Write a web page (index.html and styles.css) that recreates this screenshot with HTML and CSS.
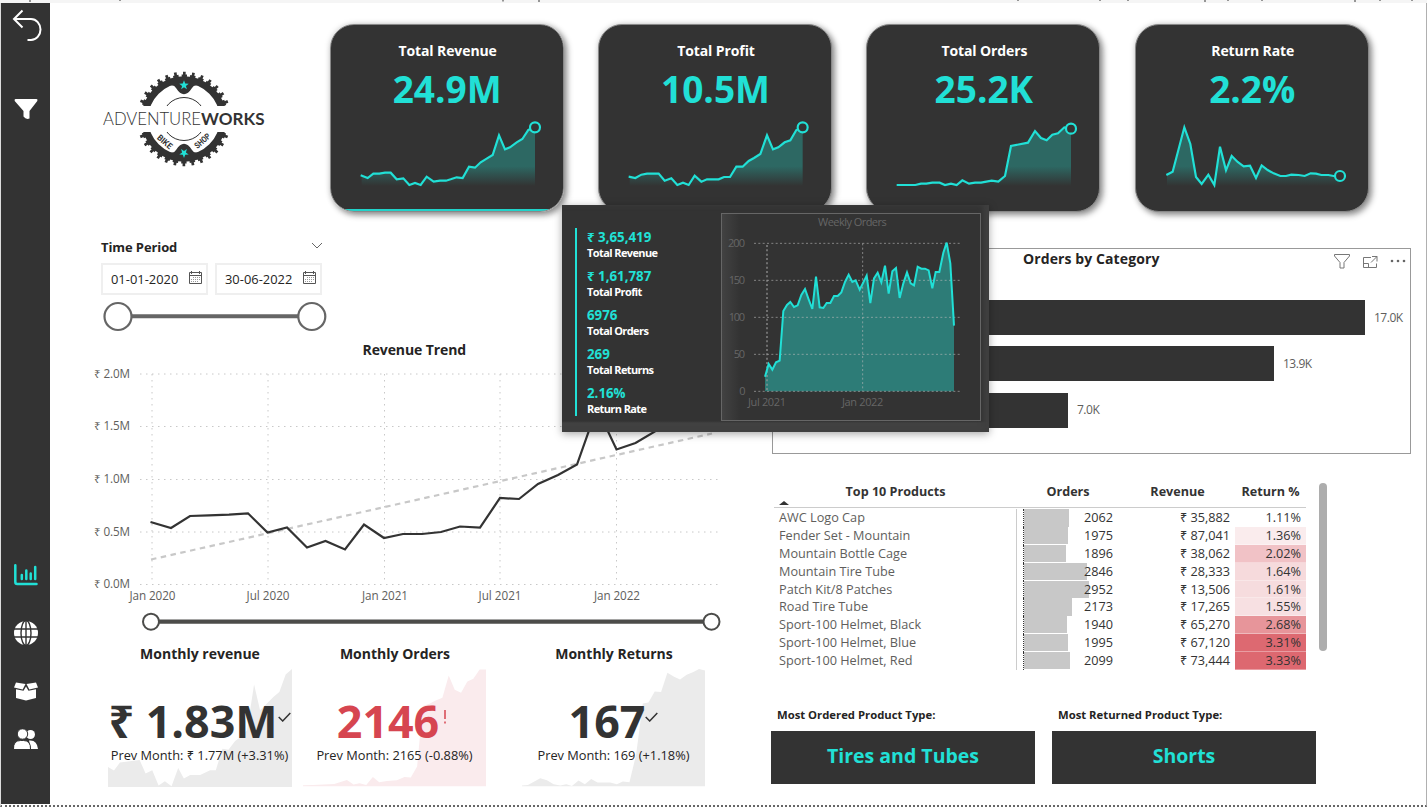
FILE: index.html
```html
<!DOCTYPE html>
<html lang="en">
<head>
<meta charset="utf-8">
<title>AdventureWorks Dashboard</title>
<link rel="stylesheet" href="styles.css">
</head>
<body>
<div class="topstrip"><svg width="1427" height="3" viewBox="0 0 1427 3"><path d="M30 0v2M120 0v1M503 0v1.500M539 0v2M1018 0v1M1100 0v1M1128 0v1M1205 0v2M1228 0v1M1262 0v1M1355 0v2M1380 0v1M1412 0v1" stroke="#777" stroke-width="1.500"/></svg></div>
<div class="page">
<nav class="sidebar">
  <svg class="nav-back" width="30" height="34" viewBox="0 0 30 34" fill="none" stroke="#fff" stroke-width="2"><path d="M10.500 1.500L2 10l8.500 8.500M2.500 10H19a9.500 10.500 0 0 1 0 21h-3.500"/></svg>
  <svg class="nav-filter" width="24" height="21" viewBox="0 0 24 21" fill="#fff"><path d="M1.500 0h21q1.500 0 .8 2L15.500 12v7.500q-3.500 1.500-6-2V12L.7 2Q.2 0 1.500 0z"/></svg>
  <svg class="nav-chart" width="24" height="22" viewBox="0 0 24 22" fill="none" stroke="#21e0d6" stroke-linecap="round" stroke-width="2.500"><path d="M1.300 1.300V18q0 2 2 2H22.500M7.800 11v4M12.300 6.500V15M16.700 9.500V15M21.200 3v12"/></svg>
  <svg class="nav-globe" width="24" height="24" viewBox="0 0 24 24"><circle cx="12" cy="12" r="12" fill="#fff"/><g fill="none" stroke="#333" stroke-width="1.400"><ellipse cx="12" cy="12" rx="5" ry="12.500"/><path d="M12 0v24M0 8h24M0 16h24"/></g></svg>
  <svg class="nav-box" width="24" height="19" viewBox="0 0 24 19" fill="#fff"><path d="M2 .5l9.500 1.500L8.700 7.500 0 5.500zM22 .5L12.500 2l2.800 5.500L24 5.500zM2 7.300l7.500 1.500L12 4.500l2.500 4.300L22 7.300V16l-10 2.500L2 16z"/></svg>
  <svg class="nav-people" width="24" height="20" viewBox="0 0 24 20" fill="#fff"><circle cx="16.500" cy="5.500" r="4.500"/><path d="M15 11.500q8-1 9 8.500h-7z"/><circle cx="8.500" cy="5" r="5.200" stroke="#333"/><path d="M-.5 20.500q-.5-9 7-9h3q7.500 0 7 9z" stroke="#333"/></svg>
</nav>
<main class="content">
  <section class="summary">
    <svg class="logo" width="170" height="100" viewBox="100 69 170 100">
      <defs><clipPath id="halves"><path d="M100 60h170v46H100zM100 132h170v40H100z"/></clipPath></defs>
      <g clip-path="url(#halves)">
        <circle cx="184" cy="119" r="39.300" fill="none" stroke="#333" stroke-width="7"/>
        <circle cx="184" cy="119" r="43" fill="none" stroke="#333" stroke-width="3" stroke-dasharray="5.400 3.043" stroke-dashoffset="2.700"/>
        <circle cx="184" cy="119" r="45.500" fill="none" stroke="#333" stroke-width="3.500" stroke-dasharray="2.700 6.234" stroke-dashoffset="1.350"/>
        <path d="M168 86Q174 84 176 88Q184 100.500 192 88Q194 84 200 86L196 79H172zM168 152Q174 154 176 150Q184 137.500 192 150Q194 154 200 152L196 159H172z" fill="#333"/>
        <circle cx="184" cy="119" r="21.500" fill="none" stroke="#333"/>
      </g>
      <path d="M184 80.300l1.200 3.300 3.500.1-2.800 2.200 1 3.400-2.900-2-2.900 2 1-3.400-2.800-2.200 3.500-.1zM184 158l1.200-3.300 3.500-.1-2.800-2.200 1-3.400-2.900 2-2.900-2 1 3.400-2.800 2.200 3.500.1z" fill="#21e0d6"/>
      <text class="logo-light" x="103" y="125" textLength="98" lengthAdjust="spacingAndGlyphs">ADVENTURE</text>
      <text class="logo-bold" x="201" y="125" textLength="63.500" lengthAdjust="spacingAndGlyphs">WORKS</text>
      <text class="logo-small" transform="translate(156.500 138.500) rotate(41)" textLength="17" lengthAdjust="spacingAndGlyphs">BIKE</text>
      <text class="logo-small" transform="translate(197.500 149) rotate(-41)" textLength="18" lengthAdjust="spacingAndGlyphs">SHOP</text>
    </svg>
    <div class="cards">
      <article class="card selected"><h3>Total Revenue</h3><strong>24.9M</strong>
        <svg viewBox="30 330 702 231"><defs><linearGradient id="fade" gradientUnits="userSpaceOnUse" x1="0" y1="330" x2="0" y2="528"><stop offset=".7" stop-color="#2d6863"/><stop offset="1" stop-color="#2d6863" stop-opacity="0"/></linearGradient></defs>
        <path fill="url(#fade)" d="M125 528V498L143 504 160 491 178 491 195 488 212 488 230 508 250 505 268 525 285 519 302 525 320 500 341 515 360 512 378 512 392 508 410 502 428 504 447 470 465 473 482 457 500 446 518 435 537 376 555 418 570 412 590 397 607 387 625 360 645 352V528z"/>
        <polyline points="122,496 143,504 160,491 178,491 195,488 212,488 230,508 250,505 268,525 285,519 302,525 320,500 341,515 360,512 378,512 392,508 410,502 428,504 447,470 465,473 482,457 500,446 518,435 537,376 555,418 570,412 590,397 607,387 625,360 645,352"/><circle cx="645" cy="352" r="15"/></svg></article>
      <article class="card"><h3>Total Profit</h3><strong>10.5M</strong>
        <svg viewBox="40 330 702 231"><path fill="url(#fade)" d="M135 528V500L152 504 170 494 187 491 222 491 240 512 260 505 278 525 295 518 312 525 330 497 350 515 367 508 402 508 418 501 436 501 455 470 474 470 492 453 508 444 527 432 547 376 565 418 581 412 600 397 617 391 635 360 654 352V528z"/>
        <polyline points="132,500 152,504 170,494 187,491 222,491 240,512 260,505 278,525 295,518 312,525 330,497 350,515 367,508 402,508 418,501 436,501 455,470 474,470 492,453 508,444 527,432 547,376 565,418 581,412 600,397 617,391 635,360 654,352"/><circle cx="654" cy="352" r="15"/></svg></article>
      <article class="card"><h3>Total Orders</h3><strong>25.2K</strong>
        <svg viewBox="35 330 702 231"><path fill="url(#fade)" d="M130 528V525L183 525 200 521 216 521 234 518 256 518 272 525 290 521 307 525 324 511 344 521 362 518 380 518 412 512 432 515 452 498 470 408 521 398 542 363 560 384 577 391 594 374 611 370 630 352 650 356V528z"/>
        <polyline points="127,525 183,525 200,521 216,521 234,518 256,518 272,525 290,521 307,525 324,511 344,521 362,518 380,518 412,512 432,515 452,498 470,408 521,398 542,363 560,384 577,391 594,374 611,370 630,352 650,356"/><circle cx="650" cy="356" r="15"/></svg></article>
      <article class="card"><h3>Return Rate</h3><strong>2.2%</strong>
        <svg viewBox="44 330 702 231"><path fill="url(#fade)" d="M140 528V494L157 485 192 352 210 402 227 501 244 522 264 494 282 525 299 410 317 481 334 438 352 456 370 469 389 467 407 504 424 466 442 480 460 490 480 498 497 498 513 494 535 495 553 498 571 490 587 491 603 495 624 495 640 498 658 498V528z"/>
        <polyline points="138,495 157,485 192,352 210,402 227,501 244,522 264,494 282,525 299,410 317,481 334,438 352,456 370,469 389,467 407,504 424,466 442,480 460,490 480,498 497,498 513,494 535,495 553,498 571,490 587,491 603,495 624,495 640,498 658,498"/><circle cx="659" cy="498" r="15"/></svg></article>
    </div>
  </section>
  <div class="columns">
  <div class="left">
    <section class="period">
      <header><h4>Time Period</h4><svg width="12" height="8" viewBox="0 0 12 8" fill="none" stroke="#666"><path d="M1 1l5 5 5-5"/></svg></header>
      <div class="dates">
        <div class="date"><span>01-01-2020</span><svg width="15" height="14" viewBox="0 0 15 14"><use href="#cal"/></svg></div>
        <div class="date"><span>30-06-2022</span><svg width="15" height="14" viewBox="0 0 15 14"><g id="cal" fill="none" stroke="#555"><path d="M1.500 1.500h12v11h-12zM1.500 4.500h12M3.500 0v3M11.500 0v3"/><path stroke="#999" stroke-dasharray="1 1" d="M5 6.500h7M3 8.500h9M3 10.500h7"/></g></svg></div>
      </div>
      <svg class="range" width="228" height="32" viewBox="101 301 228 32"><path d="M118 316.300H312" stroke="#666" stroke-width="4"/><g fill="#fff" stroke="#666" stroke-width="2.200"><circle cx="118" cy="316.500" r="13.500"/><circle cx="311.800" cy="316.500" r="13.500"/></g></svg>
    </section>
    <section class="trend">
      <h4>Revenue Trend</h4>
      <svg width="640" height="271" viewBox="90 362 640 271">
        <g stroke="#c8c8c8" stroke-dasharray="1.500 4.500"><path d="M140 374H720M140 426.500H720M140 479.500H720M140 532H720M140 584.500H720M152 374V584M268 374V584M384.500 374V584M500 374V584M616.500 374V584"/></g>
        <g class="axis"><text x="94" y="377.500" textLength="36">₹ 2.0M</text><text x="94" y="430" textLength="36">₹ 1.5M</text><text x="94" y="483" textLength="36">₹ 1.0M</text><text x="94" y="535.500" textLength="36">₹ 0.5M</text><text x="94" y="587.500" textLength="36">₹ 0.0M</text>
        <text x="129.500" y="599.500" textLength="46">Jan 2020</text><text x="246.500" y="599.500" textLength="43">Jul 2020</text><text x="362" y="599.500" textLength="46">Jan 2021</text><text x="478.500" y="599.500" textLength="43">Jul 2021</text><text x="594" y="599.500" textLength="46">Jan 2022</text></g>
        <path d="M151 559.500L712 433.500" stroke="#c8c8c8" stroke-width="2.200" stroke-dasharray="5.500 4.500"/>
        <polyline fill="none" stroke="#333" stroke-width="2.200" points="150.500,522 171,528 190,516 209,515.300 229,514.700 248,513.300 267.500,532.500 287,527.500 307,547.500 325.500,541 345,549.500 364,524.500 384,538 403,534 422,534 441,532 460,526.500 480,527.500 500,498 519,499 538,484 558,475 577,464.500 597,408 616.500,449.500 635.500,443 655,431.500 674,410 693,400 711,392"/>
        <path d="M151 621.700H712" stroke="#4c4c4a" stroke-width="4.200"/><g fill="#fff" stroke="#4c4c4a" stroke-width="2"><circle cx="151" cy="621.700" r="8"/><circle cx="711.500" cy="621.700" r="8"/></g>
      </svg>
    </section>
    <section class="kpis">
      <article class="kpi"><h4>Monthly revenue</h4><div class="stack"><svg viewBox="323 356 553 354"><path fill="#ebebeb" d="M323 710V650L341 661 359 637 418 629 436 670 456 660 475 706 494 693 514 708 534 653 551 685 570 674 600 674 630 660 647 660 667 595 685 598 705 572 722 560 741 540 762 402 780 480 800 460 820 440 838 425 857 372 876 356V710z"/></svg>
        <div class="goal"><p class="big">₹ 1.83M<svg width="13" height="10" viewBox="0 0 13 10" fill="none" stroke="#333" stroke-width="1.500"><path d="M.7 5l4 4L12.300 1"/></svg></p><p class="prev">Prev Month: ₹ 1.77M (+3.31%)</p></div></div></article>
      <article class="kpi bad"><h4>Monthly Orders</h4><div class="stack"><svg viewBox="8 143 553 354"><path fill="#faebed" d="M8 495V492L37 491 102 488 140 476 160 490 178 486 198 491 218 467 237 483 260 479 290 477 313 467 332 469 351 436 368 254 388 247 405 238 427 229 446 162 464 205 483 214 502 180 520 172 539 144 558 144V495z"/></svg>
        <div class="goal"><p class="big">2146<svg width="13" height="14" viewBox="0 0 13 14" stroke="#d64550" stroke-width="1.500"><path d="M6 0v9M6 11.500v2"/></svg></p><p class="prev">Prev Month: 2165 (-0.88%)</p></div></div></article>
      <article class="kpi"><h4>Monthly Returns</h4><div class="stack"><svg viewBox="665 143 553 354"><path fill="#ebebeb" d="M665 495V493L683 491 720 471 740 477 760 489 780 493 798 489 815 494 835 478 854 489 873 473 892 484 930 484 950 489 968 481 988 483 1008 400 1028 246 1045 243 1064 210 1083 212 1102 154 1122 166 1140 174 1160 160 1180 152 1197 143 1215 147V495z"/></svg>
        <div class="goal"><p class="big">167<svg width="13" height="10" viewBox="0 0 13 10" fill="none" stroke="#333" stroke-width="1.500"><path d="M.7 5l4 4L12.300 1"/></svg></p><p class="prev">Prev Month: 169 (+1.18%)</p></div></div></article>
    </section>
  </div>
  <div class="right">
    <section class="category">
      <header><h4>Orders by Category</h4>
      <svg width="76" height="18" viewBox="1333 252 76 18" fill="none" stroke="#777"><path d="M1334.500 254.500h15v1.500l-5.500 6.500v5.500h-4v-5.500l-5.500-6.500zM1371 257.500h-7.500v10h13v-4M1372 256.500h5v5M1377 256.500l-6 6M1363.500 263.500h5v4"/><g fill="#666" stroke="none"><circle cx="1392" cy="261" r="1.300"/><circle cx="1398" cy="261" r="1.300"/><circle cx="1404" cy="261" r="1.300"/></g></svg></header>
      <div class="bars">
        <div class="bar"><i style="width:515px"></i><span>17.0K</span></div>
        <div class="bar"><i style="width:424px"></i><span>13.9K</span></div>
        <div class="bar"><i style="width:218px"></i><span>7.0K</span></div>
      </div>
    </section>
    <section class="products">
      <table>
        <colgroup><col class="c1"><col class="gapcol"><col class="c2"><col class="c3"><col class="c4"></colgroup>
        <thead><tr><th class="name-head"><i class="sort"></i>Top 10 Products</th><th></th><th>Orders</th><th class="rev-head">Revenue</th><th>Return %</th></tr></thead>
        <tbody>
        <tr><td>AWC Logo Cap</td><td></td><td class="ord"><i style="width:45px"></i><b>2062</b></td><td>₹ 35,882</td><td>1.11%</td></tr>
        <tr><td>Fender Set - Mountain</td><td></td><td class="ord"><i style="width:44px"></i><b>1975</b></td><td>₹ 87,041</td><td style="background:#faeced">1.36%</td></tr>
        <tr><td>Mountain Bottle Cage</td><td></td><td class="ord"><i style="width:42px"></i><b>1896</b></td><td>₹ 38,062</td><td style="background:#f1c2c6">2.02%</td></tr>
        <tr><td>Mountain Tire Tube</td><td></td><td class="ord"><i style="width:63px"></i><b>2846</b></td><td>₹ 28,333</td><td style="background:#f6dadc">1.64%</td></tr>
        <tr><td>Patch Kit/8 Patches</td><td></td><td class="ord"><i style="width:65px"></i><b>2952</b></td><td>₹ 13,506</td><td style="background:#f6dcde">1.61%</td></tr>
        <tr><td>Road Tire Tube</td><td></td><td class="ord"><i style="width:48px"></i><b>2173</b></td><td>₹ 17,265</td><td style="background:#f7e0e2">1.55%</td></tr>
        <tr><td>Sport-100 Helmet, Black</td><td></td><td class="ord"><i style="width:43px"></i><b>1940</b></td><td>₹ 65,270</td><td style="background:#e7959a">2.68%</td></tr>
        <tr><td>Sport-100 Helmet, Blue</td><td></td><td class="ord"><i style="width:44px"></i><b>1995</b></td><td>₹ 67,120</td><td style="background:#dd6971">3.31%</td></tr>
        <tr><td>Sport-100 Helmet, Red</td><td></td><td class="ord"><i style="width:46px"></i><b>2099</b></td><td>₹ 73,444</td><td style="background:#dd6870">3.33%</td></tr>
        </tbody>
      </table>
      <div class="scrollbar"></div>
    </section>
    <section class="types">
      <div><h5>Most Ordered Product Type:</h5><p>Tires and Tubes</p></div>
      <div><h5>Most Returned Product Type:</h5><p>Shorts</p></div>
    </section>
  </div>
  </div>
</main>
</div>
<aside class="tooltip">
  <dl><dt>₹ 3,65,419</dt><dd>Total Revenue</dd><dt>₹ 1,61,787</dt><dd>Total Profit</dd><dt>6976</dt><dd>Total Orders</dd><dt>269</dt><dd>Total Returns</dd><dt>2.16%</dt><dd>Return Rate</dd></dl>
  <div class="weekly">
    <svg width="258" height="206" viewBox="486 42 774 618">
      <path d="M615 574V530L626 492 637 509 648 487 659 482 670 333 681 315 691 306 702 321 713 316 724 285 735 267 746 298 757 327 768 230 779 322 790 324 800 309 811 309 822 288 833 288 844 277 855 246 866 224 877 246 887 241 899 269 910 247 920 227 931 309 942 235 953 218 964 247 975 197 986 281 997 214 1008 204 1019 294 1030 250 1041 217 1052 250 1062 256 1073 200 1084 206 1095 206 1106 211 1117 265 1127 216 1138 216 1150 158 1160 128 1171 190 1182 377V574z" fill="#2d7c77"/>
      <path d="M582 130H1206M582 241H1206M582 352H1206M582 463H1206M582 574H1206M908 130V574" stroke="#bbb" stroke-opacity=".6" stroke-width="3" stroke-dasharray="6 7"/>
      <path d="M621 135V574" stroke="#999" stroke-opacity=".6" stroke-width="6" stroke-dasharray="6 7"/>
      <polyline fill="none" stroke="#21e0d6" stroke-width="6" points="615,530 626,492 637,509 648,487 659,482 670,333 681,315 691,306 702,321 713,316 724,285 735,267 746,298 757,327 768,230 779,322 790,324 800,309 811,309 822,288 833,288 844,277 855,246 866,224 877,246 887,241 899,269 910,247 920,227 931,309 942,235 953,218 964,247 975,197 986,281 997,214 1008,204 1019,294 1030,250 1041,217 1052,250 1062,256 1073,200 1084,206 1095,206 1106,211 1117,265 1127,216 1138,216 1150,158 1160,128 1171,190 1182,377"/>
      <g class="weekly-text"><text x="774" y="79" textLength="206">Weekly Orders</text><text x="504" y="141" textLength="51">200</text><text x="506" y="252" textLength="49">150</text><text x="506" y="363" textLength="49">100</text><text x="521" y="474" textLength="34">50</text><text x="538" y="585">0</text><text x="564" y="618" textLength="114">Jul 2021</text><text x="846" y="618" textLength="124">Jan 2022</text></g>
    </svg>
  </div>
</aside>
</body>
</html>
```
FILE: styles.css
```css
* { box-sizing: border-box; margin: 0; padding: 0; }
body { width: 1427px; height: 807px; overflow: hidden; position: relative; background: #fff; color: #252423; font-family: "Open Sans", "Noto Sans", sans-serif; font-size: 12px; }
svg { display: block; flex: none; }
i { font-style: normal; }
.topstrip { height: 3px; background: #f5f5f5; }
.page { display: flex; height: 804px; border-left: 1px solid #ddd; border-right: 1px solid #b0b0b0; border-bottom: 2px dotted #666; }
.sidebar { width: 49px; height: 801px; background: #333; display: flex; flex-direction: column; align-items: center; padding-top: 6px; }
.nav-back { margin-left: 3px; }
.nav-filter { margin-top: 56px; }
.nav-chart { margin-top: 444px; }
.nav-globe { margin-top: 35px; }
.nav-box { margin-top: 37px; }
.nav-people { margin-top: 28px; }
.content { flex: 1; }
.summary { display: flex; height: 237px; padding: 21px 0 0 50px; }
.logo { margin-top: 45px; }
.logo text { fill: #333; }
.logo-light { font: 300 17.500px Lato, sans-serif; }
.logo-bold { font: 700 17.500px Lato, sans-serif; }
.logo .logo-small { font: 700 8.500px Roboto, sans-serif; }
.cards { display: flex; gap: 34.400px; margin-left: 59.600px; }
.card { width: 234px; height: 188px; border-radius: 24px; background: #333; border: 1px solid #888; box-shadow: 3px 3px 6px rgba(0,0,0,.42), 0 0 6px rgba(0,0,0,.15); text-align: center; color: #fff; overflow: hidden; display: flex; flex-direction: column; }
.card.selected { background: linear-gradient(#333 183.500px, #21d3ca 184px); }
.card h3 { font-size: 14px; line-height: 20px; margin: 16px 0 0 2px; letter-spacing: -.1px; }
.card strong { font-size: 37px; line-height: 44px; margin: 6px 0 0 1px; color: #21e0d6; }
.card svg { width: 234px; height: 77px; margin: 9px 0 0 -1px; }
.card polyline, .card circle { fill: none; stroke: #21e0d6; stroke-width: 6.500; }
.card circle { fill: #333; }
.columns { display: flex; }
.left { width: 722px; }
.right { width: 640px; padding-top: 8px; }
h4 { font-size: 14px; line-height: 20px; letter-spacing: -.1px; }
.period { height: 100px; padding: 0 0 0 51px; }
.period header { display: flex; justify-content: space-between; align-items: center; width: 222px; height: 14px; }
.period header h4 { font-size: 13px; letter-spacing: -.1px; }
.period header svg { margin-bottom: 2px; }
.dates { display: flex; gap: 7px; margin-top: 9px; }
.date { width: 107px; height: 32px; border: 2px solid #efefef; display: flex; align-items: center; justify-content: space-between; padding: 0 3px 0 8px; font-size: 12.900px; }
.date svg { margin-bottom: 3px; }
.range { margin-top: 6px; }
.trend h4 { margin-left: 312.500px; letter-spacing: -.1px; }
.trend > svg { margin: 2px 0 0 40px; }
.axis text { font-size: 11.700px; fill: #605e5c; }
.kpis { display: flex; margin-left: 58px; gap: 10px; padding-top: 11px; }
.kpi { width: 185px; }
.kpi:nth-child(3) { margin-left: 24px; }
.kpi h4 { text-align: center; letter-spacing: 0; padding-right: 1px; }
.stack { display: grid; margin-top: 5px; }
.stack > * { grid-area: 1 / 1; }
.stack > svg { width: 184px; height: 118px; }
.goal { display: flex; flex-direction: column; align-items: center; padding: 24px 2px 0 0; white-space: nowrap; }
.big { font-size: 44.800px; font-weight: 700; line-height: 55px; height: 54px; display: flex; align-items: center; color: #333; }
.bad .big { color: #d64550; }
.big svg { margin-bottom: 6px; }
.prev { font-size: 12.800px; line-height: 16px; }
.category { height: 206px; width: 639px; border: 1px solid #999; }
.category header { display: flex; height: 22px; padding-left: 250px; }
.category header h4 { letter-spacing: .1px; width: 138px; white-space: nowrap; }
.category header svg { margin: 3px 0 0 172px; }
.bars { display: flex; flex-direction: column; gap: 11.300px; padding: 29px 0 0 77px; }
.bar { display: flex; align-items: center; height: 35px; gap: 9px; color: #605e5c; font-size: 12px; letter-spacing: -.5px; }
.bar i { background: #333; height: 35px; }
.bar span { margin-top: -1px; }
.products { display: flex; margin-top: 26px; padding-left: 2px; height: 190px; }
table { width: 532px; table-layout: fixed; border-collapse: separate; border-spacing: 0; align-self: flex-start; }
.c1 { width: 243px; } .gapcol { width: 6px; } .c2 { width: 90px; } .c3 { width: 122px; } .c4 { width: 71px; }
th { height: 28px; border-bottom: 1px solid #ccc; font-size: 12.600px; line-height: 18px; vertical-align: top; padding-top: 3px; color: #333; white-space: nowrap; }
tbody::before { content: ""; display: table-row; height: 1.400px; }
.rev-head { padding-left: 7px; }
.name-head { position: relative; }
.sort { position: absolute; left: 5px; bottom: 2px; border: 5px solid transparent; border-top: 0; border-bottom: 4px solid #333; }
td { height: 17.800px; line-height: 17.800px; font-size: 12.700px; text-align: right; padding: 0 5px 0 0; color: #333; white-space: nowrap; }
td:first-child { text-align: left; padding-left: 5px; color: #605e5c; border-right: 1px solid #ccc; }
td:last-child { box-shadow: inset 0 -1px rgba(255,255,255,.35); }
td.ord { padding: 0; display: flex; border-left: 1px dotted #333; position: relative; justify-content: flex-end; }
td.ord i { position: absolute; left: 0; top: 0; height: 17.300px; background: #c8c8c8; }
td.ord b { font-weight: 400; position: relative; }
.scrollbar { width: 8px; height: 168px; border-radius: 4px; background: #adadad; margin: 3px 0 0 13px; }
.types { display: flex; gap: 17px; margin-top: 37px; margin-left: -1px; }
.types div { width: 264px; }
h5 { font-size: 11.300px; line-height: 16px; padding-left: 6px; color: #252423; }
.types p { background: #333; color: #21e0d6; font-weight: 700; font-size: 19.500px; height: 53px; line-height: 50px; text-align: center; margin-top: 8px; }
.tooltip { position: absolute; left: 562px; top: 205px; width: 427px; height: 227px; background: linear-gradient(#333 216px, #414141 218px); box-shadow: 0 2px 8px rgba(0,0,0,.35), inset -6px 0 5px #3f3f3f; display: flex; padding: 8px 0 0 13px; }
.tooltip dl { width: 146px; height: 188px; margin-top: 15px; border-left: 2px solid #21e0d6; padding-left: 10px; }
.tooltip dt { color: #21e0d6; font-size: 13.300px; line-height: 18px; height: 17px; font-weight: 700; }
.tooltip dd { color: #fff; font-size: 11px; line-height: 15px; height: 22px; font-weight: 700; letter-spacing: -.6px; }
.weekly { width: 260px; height: 208px; border: 1px solid #666; background: linear-gradient(90deg, #424242, #333 18px); }
.weekly-text text { fill: #666; font-size: 33px; }
```
